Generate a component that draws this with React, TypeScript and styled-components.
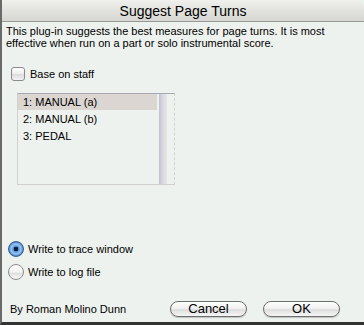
import React from "react";
import styled, { createGlobalStyle } from "styled-components";

const Global = createGlobalStyle`
  html, body { margin: 0; padding: 0; background: #eef2ee; }
  body { font-family: "Liberation Sans", Arial, sans-serif; }
`;

const Win = styled.div`
  width: 364px;
  height: 325px;
  box-sizing: border-box;
  display: flex;
  flex-direction: column;
  background: #eef2ee;
  border-left: 2px solid #6a6a6a;
  border-bottom: 3px solid #333;
  color: #000;
  font-size: 11px;
  overflow: hidden;
`;

const TitleBar = styled.div`
  height: 22px;
  flex: none;
  display: flex;
  align-items: center;
  justify-content: center;
  background: linear-gradient(#f0f0ee, #e2e2de 50%, #d6d6d2);
  border-bottom: 1px solid #9a9a98;
  border-top-left-radius: 5px;
  border-top-right-radius: 7px;
  font-size: 14px;
  box-sizing: border-box;
`;

const Body = styled.div`
  flex: 1;
  display: flex;
  flex-direction: column;
  padding: 3px 0 0 4px;
`;

const Desc = styled.p`
  margin: 0;
  line-height: 12px;
`;

const CheckRow = styled.label`
  display: flex;
  align-items: center;
  gap: 5px;
  margin: 18px 0 0 5px;
  height: 14px;
`;

const CheckBox = styled.span`
  width: 12px;
  height: 12px;
  border: 1px solid #8a8a8a;
  border-radius: 3px;
  background: linear-gradient(#ffffff, #f0f0f0 45%, #dcdcdc 55%, #f4f4f4);
  box-sizing: content-box;
`;

const List = styled.div`
  margin: 12px 0 0 11px;
  width: 158px;
  height: 92px;
  box-sizing: border-box;
  display: flex;
  border-top: 1px solid #a8a8b0;
  border-left: 1px solid #d0d0cc;
  border-bottom: 1px solid #d0d0cc;
  border-right: 1px dashed #d6d2cc;
`;

const Rows = styled.div`
  width: 139px;
  display: flex;
  flex-direction: column;
`;

const Row = styled.div<{ $sel?: boolean }>`
  height: 16px;
  line-height: 16px;
  padding-left: 5px;
  background: ${(p) => (p.$sel ? "#dcd6d2" : "transparent")};
  margin-bottom: 1px;
`;

const Track = styled.div`
  width: 8px;
  margin-left: 2px;
  background: linear-gradient(90deg, #c0c0d4, #d6d6e2 40%, #e8e6e2);
`;

const Spacer = styled.div`
  flex: 1;
`;

const RadioRow = styled.label`
  display: flex;
  align-items: center;
  gap: 4px;
  margin-left: 2px;
  height: 16px;
  margin-bottom: 7px;
`;

const Radio = styled.span<{ $on?: boolean }>`
  width: 16px;
  height: 16px;
  border-radius: 50%;
  box-sizing: border-box;
  border: 1px solid ${(p) => (p.$on ? "#3a5f8c" : "#8a8a8a")};
  background: ${(p) =>
    p.$on
      ? "radial-gradient(circle at 50% 50%, #0a1a30 0 2px, #4e8fd8 2.5px, #9cc8f4 5px, #2f6ec0 7.5px)"
      : "linear-gradient(#ffffff, #f2f2f2 50%, #e0e0e0 60%, #fafafa)"};
`;

const Footer = styled.div`
  display: flex;
  align-items: center;
  margin: 13px 24px 5px 4px;
  height: 17px;
`;

const Credit = styled.span`
  flex: 1;
`;

const Button = styled.button`
  width: 77px;
  height: 16px;
  margin-left: 16px;
  padding: 0;
  border: 1px solid #6e6e6e;
  border-radius: 8px;
  background: linear-gradient(#ffffff, #f2f2f2 45%, #dedede 55%, #f6f6f6);
  font-family: "Liberation Sans", Arial, sans-serif;
  font-size: 13px;
  line-height: 14px;
  color: #000;
  box-shadow: 0 1px 1px rgba(0, 0, 0, 0.2);
`;

export default function App() {
  return (
    <>
      <Global />
      <Win>
        <TitleBar>Suggest Page Turns</TitleBar>
        <Body>
          <Desc>
            This plug-in suggests the best measures for page turns. It is most
            <br />
            effective when run on a part or solo instrumental score.
          </Desc>
          <CheckRow>
            <CheckBox />
            Base on staff
          </CheckRow>
          <List>
            <Rows>
              <Row $sel>1: MANUAL (a)</Row>
              <Row>2: MANUAL (b)</Row>
              <Row>3: PEDAL</Row>
            </Rows>
            <Track />
          </List>
          <Spacer />
          <RadioRow>
            <Radio $on />
            Write to trace window
          </RadioRow>
          <RadioRow>
            <Radio />
            Write to log file
          </RadioRow>
          <Footer>
            <Credit>By Roman Molino Dunn</Credit>
            <Button>Cancel</Button>
            <Button>OK</Button>
          </Footer>
        </Body>
      </Win>
    </>
  );
}
